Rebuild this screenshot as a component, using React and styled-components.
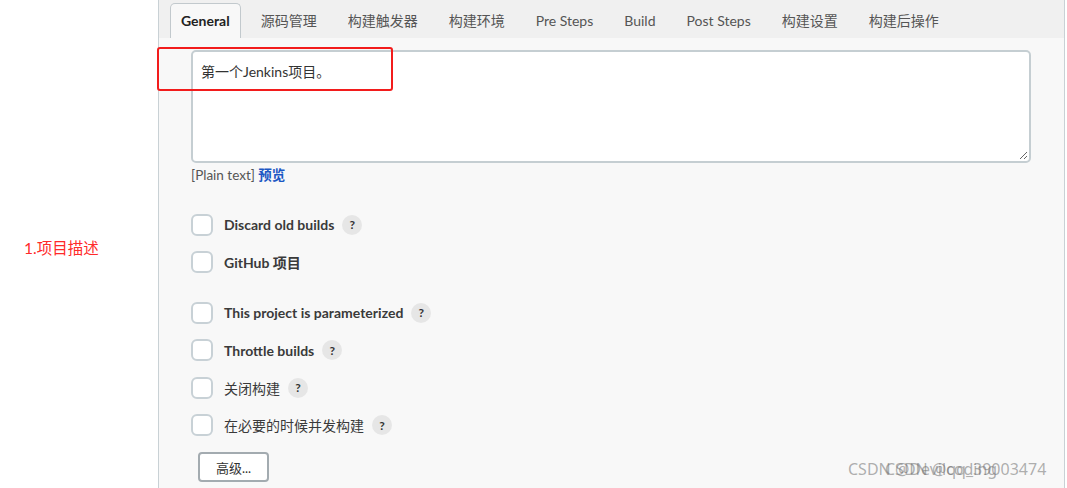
import styled, { createGlobalStyle } from "styled-components";

const GlobalStyle = createGlobalStyle`
  * { box-sizing: border-box; }
  body {
    margin: 0;
    background: #ffffff;
    font-family: "Lato", "Noto Sans CJK SC", sans-serif;
    color: #333;
  }
`;

const Page = styled.div`
  position: relative;
  width: 1067px;
  height: 488px;
  overflow: hidden;
  display: flex;
`;

const Side = styled.div`
  width: 158px;
  flex-shrink: 0;
  padding: 236px 0 0 24px;
`;

const Note = styled.span`
  font-size: 15.5px;
  color: #ff2a2a;
`;

const Panel = styled.div`
  width: 907px;
  flex-shrink: 0;
  background: #f8f8f8;
  border-left: 1px solid #c9d1d5;
  border-right: 1px solid #c9d1d5;
  display: flex;
  flex-direction: column;
`;

const TabBar = styled.div`
  height: 38px;
  background: #f0f0f0;
  display: flex;
  align-items: flex-end;
  gap: 9px;
  padding-left: 11px;
`;

const Tab = styled.div`
  height: 35px;
  padding: 0 10px 2px;
  display: flex;
  align-items: center;
  font-size: 14px;
  color: ${(p) => (p.$active ? "#222" : "#555")};
  font-weight: ${(p) => (p.$active ? 700 : 400)};
  background: ${(p) => (p.$active ? "#f8f8f8" : "transparent")};
  border: 1px solid ${(p) => (p.$active ? "#c2c9cd" : "transparent")};
  border-bottom: none;
  border-radius: 5px 5px 0 0;
`;

const Body = styled.div`
  padding: 12px 33px 0 32px;
  display: flex;
  flex-direction: column;
`;

const TextArea = styled.div`
  height: 113px;
  background: #fff;
  border: 2px solid #c5ced2;
  border-radius: 5px;
  padding: 9px 8px;
  font-size: 14px;
  color: #333;
  position: relative;
`;

const Grip = styled.svg`
  position: absolute;
  right: 1px;
  bottom: 1px;
`;

const Format = styled.div`
  margin-top: 3px;
  font-size: 13.5px;
  color: #555;
  line-height: 18px;
`;

const Preview = styled.span`
  color: #1b57c4;
  font-weight: 700;
`;

const Options = styled.div`
  margin-top: 22px;
  display: flex;
  flex-direction: column;
`;

const Row = styled.div`
  height: 37.5px;
  display: flex;
  align-items: center;
  margin-top: ${(p) => (p.$gap ? "13px" : "0")};
`;

const Box = styled.span`
  width: 22px;
  height: 22px;
  border: 2px solid #c8d1d6;
  border-radius: 6px;
  background: #fff;
  flex-shrink: 0;
`;

const Label = styled.span`
  margin-left: 11px;
  font-size: 14px;
  font-weight: ${(p) => (p.$plain ? 400 : 700)};
  color: #3a3a3a;
`;

const Help = styled.span`
  margin-left: 8px;
  width: 20px;
  height: 20px;
  border-radius: 50%;
  background: #e6e6e6;
  color: #333;
  font-size: 12px;
  font-weight: 700;
  display: flex;
  align-items: center;
  justify-content: center;
`;

const Button = styled.button`
  margin: 8px 0 0 7px;
  width: 71px;
  height: 30px;
  border: 2px solid #a3abb0;
  border-radius: 4px;
  background: #fff;
  font-family: inherit;
  font-size: 13px;
  color: #333;
  align-self: flex-start;
`;

const Highlight = styled.div`
  position: absolute;
  left: 157px;
  top: 47px;
  width: 236px;
  height: 44px;
  border: 2px solid #f21c1c;
  border-radius: 3px;
  pointer-events: none;
`;

const Mark = styled.span`
  position: absolute;
  top: 458px;
  left: ${(p) => p.$x}px;
  font-family: "Noto Sans", sans-serif;
  font-size: 16px;
  color: rgba(110, 110, 110, 0.55);
  white-space: nowrap;
  pointer-events: none;
`;

const tabs = ["General", "源码管理", "构建触发器", "构建环境", "Pre Steps", "Build", "Post Steps", "构建设置", "构建后操作"];

const options = [
  { label: "Discard old builds", help: true },
  { label: "GitHub 项目" },
  { label: "This project is parameterized", help: true, gap: true },
  { label: "Throttle builds", help: true },
  { label: "关闭构建", help: true, plain: true },
  { label: "在必要的时候并发构建", help: true, plain: true },
];

export default function App() {
  return (
    <>
      <GlobalStyle />
      <Page>
        <Side>
          <Note>1.项目描述</Note>
        </Side>
        <Panel>
          <TabBar>
            {tabs.map((t, i) => (
              <Tab key={t} $active={i === 0}>{t}</Tab>
            ))}
          </TabBar>
          <Body>
            <TextArea>
              第一个Jenkins项目。
              <Grip width="10" height="10" viewBox="0 0 10 10">
                <path d="M9 2 L2 9 M9 6 L6 9" stroke="#666" strokeWidth="1" />
              </Grip>
            </TextArea>
            <Format>
              [Plain text] <Preview>预览</Preview>
            </Format>
            <Options>
              {options.map((o) => (
                <Row key={o.label} $gap={o.gap}>
                  <Box />
                  <Label $plain={o.plain}>{o.label}</Label>
                  {o.help && <Help>?</Help>}
                </Row>
              ))}
            </Options>
            <Button>高级...</Button>
          </Body>
        </Panel>
        <Highlight />
        <Mark $x={848}>CSDN @Devilcoding</Mark>
        <Mark $x={885}>CSDN @qq_39003474</Mark>
      </Page>
    </>
  );
}
